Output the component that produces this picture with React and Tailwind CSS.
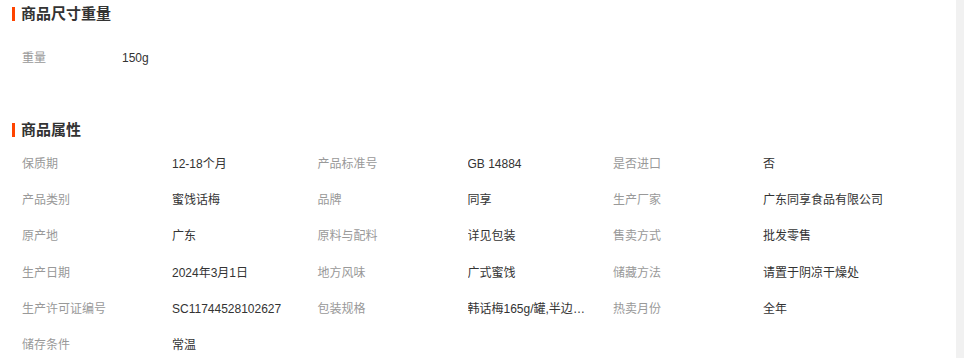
import React from "react";

const attrs = [
  ["保质期", "12-18个月", "产品标准号", "GB 14884", "是否进口", "否"],
  ["产品类别", "蜜饯话梅", "品牌", "同享", "生产厂家", "广东同享食品有限公司"],
  ["原产地", "广东", "原料与配料", "详见包装", "售卖方式", "批发零售"],
  ["生产日期", "2024年3月1日", "地方风味", "广式蜜饯", "储藏方法", "请置于阴凉干燥处"],
  ["生产许可证编号", "SC11744528102627", "包装规格", "韩话梅165g/罐,半边梅165g/罐", "热卖月份", "全年"],
  ["储存条件", "常温"],
];

function Title({ children }) {
  return (
    <div className="flex items-center h-[28px] pl-[12px] shrink-0">
      <span className="w-[3px] h-[14px] bg-[#ff4400] mr-[6px]" />
      <span className="text-[15px] font-bold text-[#333] leading-[28px]">{children}</span>
    </div>
  );
}

export default function App() {
  return (
    <div
      className="flex items-start w-[964px] h-[358px] bg-white overflow-hidden"
      style={{ fontFamily: '"Liberation Sans", "Noto Sans CJK SC", sans-serif' }}
    >
      <div className="flex-1 flex flex-col">
        <Title>商品尺寸重量</Title>
        <div className="flex items-center h-[36px] mt-[12px] pl-[22px] text-[12px] shrink-0">
          <span className="w-[100px] text-[#999]">重量</span>
          <span className="text-[#333]">150g</span>
        </div>
        <div className="mt-[40px] shrink-0">
          <Title>商品属性</Title>
        </div>
        <div className="flex flex-col mt-[2px] pl-[22px] text-[12px] shrink-0">
          {attrs.map((row, i) => (
            <div key={i} className="flex items-center h-[36.2px] shrink-0">
              {[0, 2, 4].map((j) =>
                row[j] ? (
                  <div key={j} className="flex w-[295.5px] shrink-0">
                    <span className="w-[150px] shrink-0 text-[#999]">{row[j]}</span>
                    <span className="block w-[120px] overflow-hidden text-ellipsis whitespace-nowrap text-[#333]">
                      {row[j + 1]}
                    </span>
                  </div>
                ) : null
              )}
            </div>
          ))}
        </div>
      </div>
      <div className="w-[8px] h-[358px] shrink-0 bg-[#f1f1f1]" />
    </div>
  );
}
